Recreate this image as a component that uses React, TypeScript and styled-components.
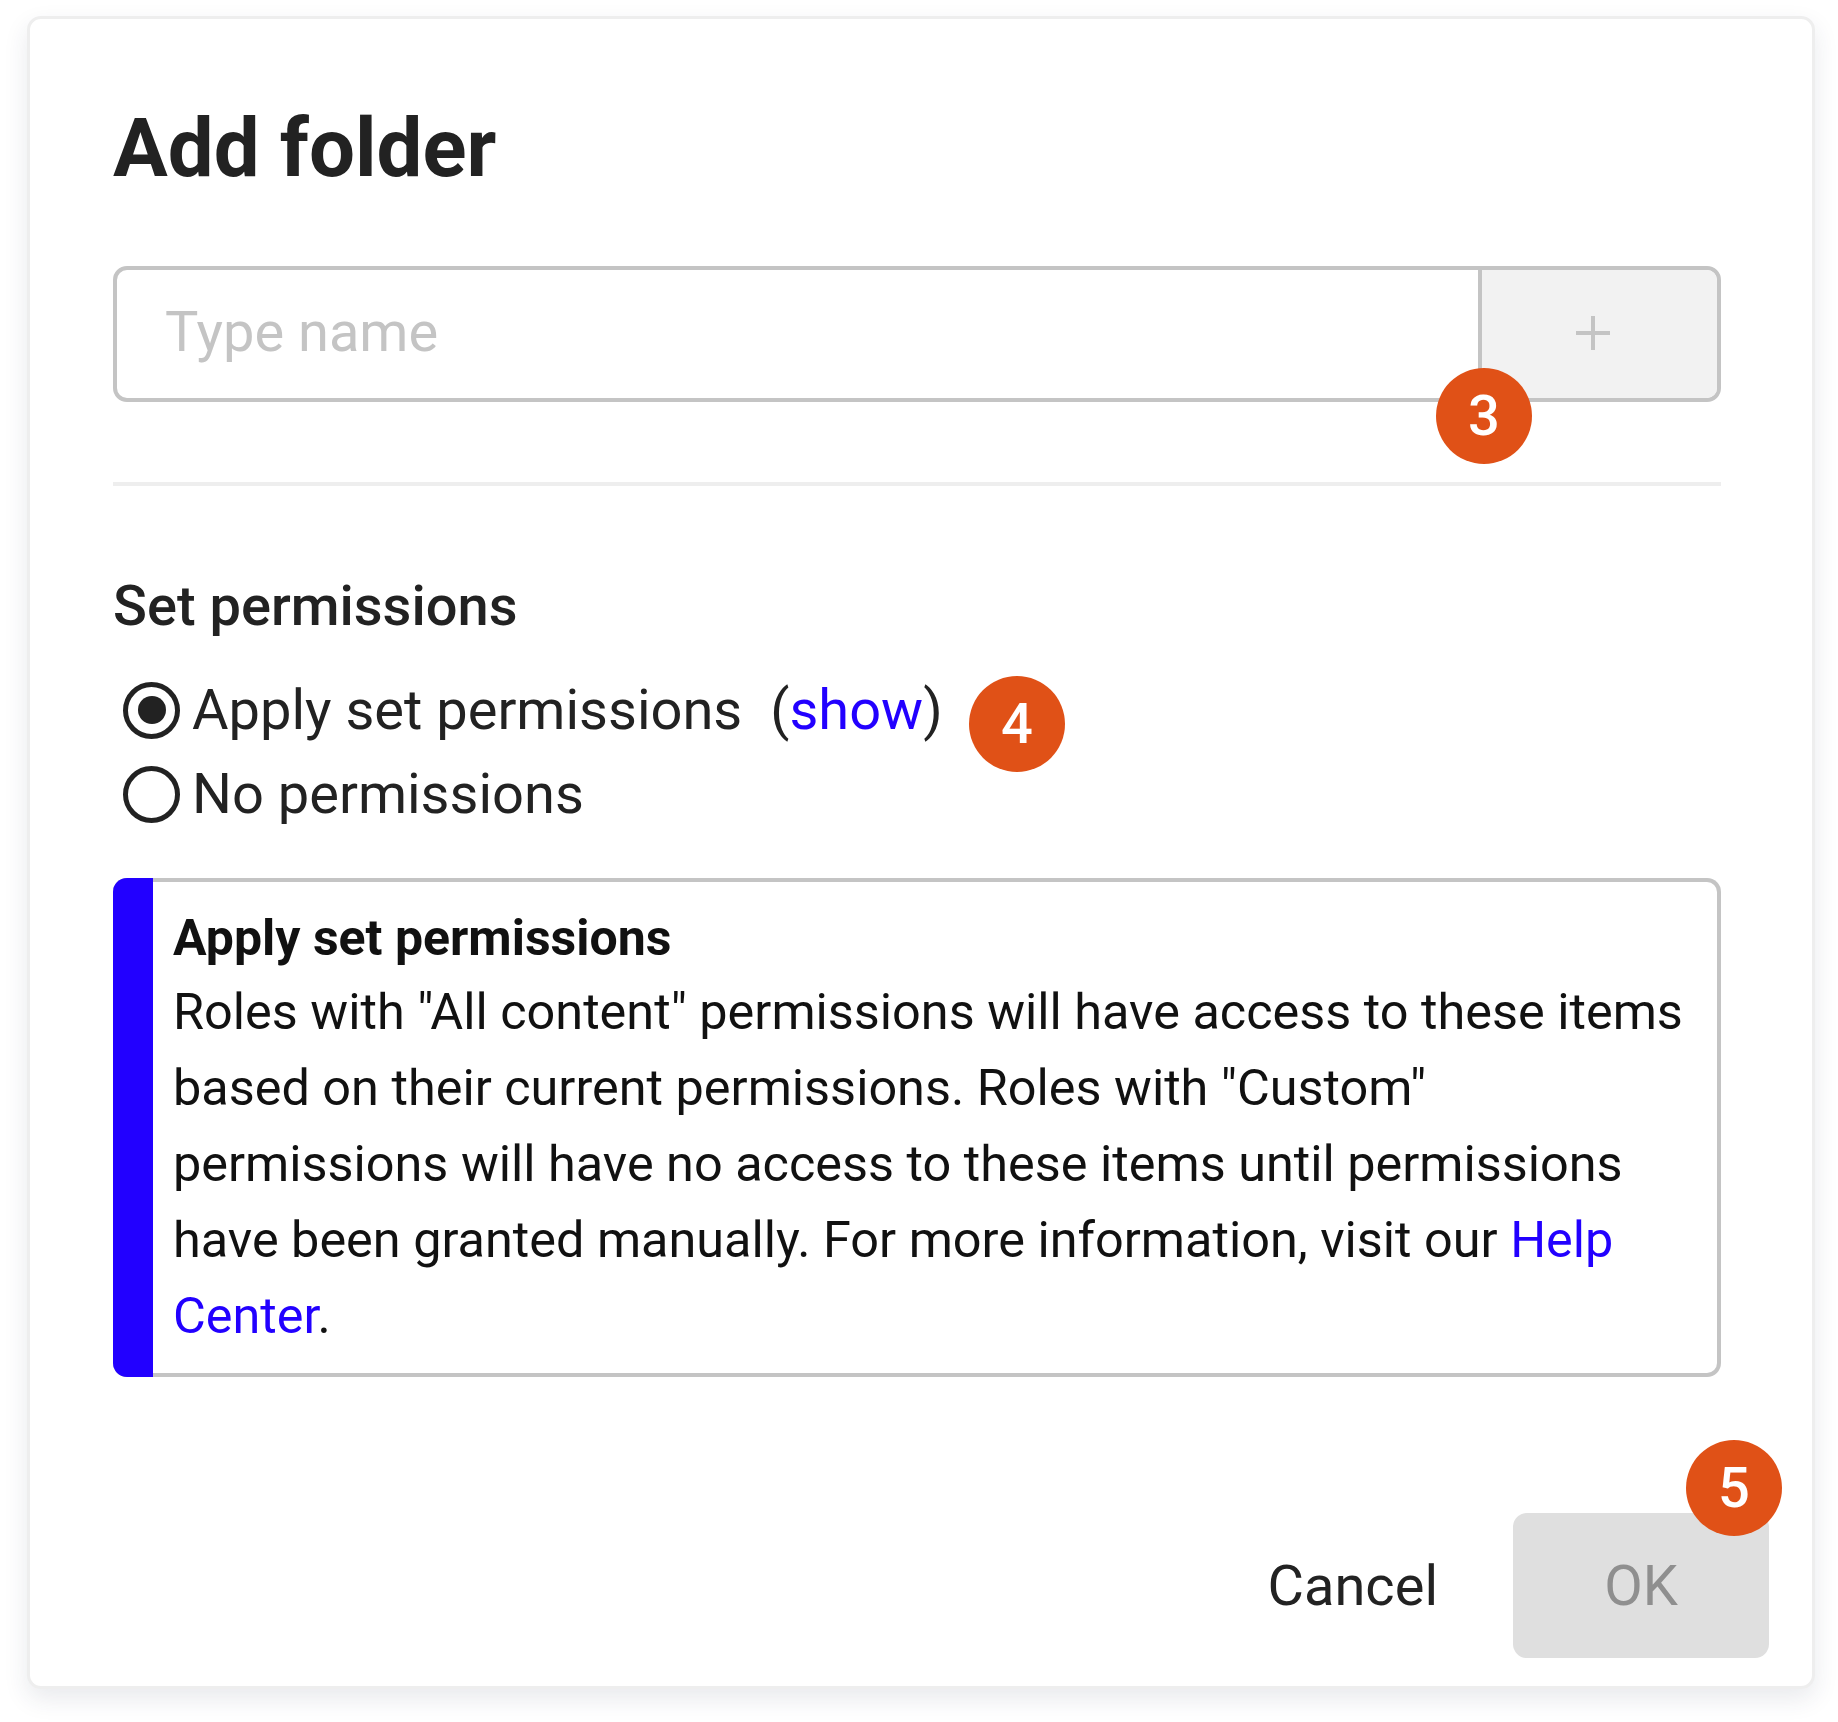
import React from "react";
import styled, { createGlobalStyle } from "styled-components";

const GlobalStyle = createGlobalStyle`
  html, body {
    margin: 0;
    padding: 0;
    background: #ffffff;
  }
  body {
    font-family: Roboto, "Liberation Sans", sans-serif;
    color: #222222;
  }
`;

const Page = styled.div`
  width: 1838px;
  height: 1722px;
  box-sizing: border-box;
  padding: 16px 23px 33px 27px;
`;

const Card = styled.div`
  box-sizing: border-box;
  height: 100%;
  display: flex;
  flex-direction: column;
  background: #ffffff;
  border: 3px solid #eeeeee;
  border-radius: 14px;
  box-shadow: 0 10px 24px rgba(40, 50, 80, 0.1);
`;

const Content = styled.div`
  flex: 1;
  display: flex;
  flex-direction: column;
  padding: 0 91px 0 83px;
`;

const Title = styled.h1`
  margin: 0;
  padding-top: 82px;
  font-size: 81.5px;
  line-height: 94px;
  font-weight: 700;
  color: #222222;
`;

const NameField = styled.div`
  position: relative;
  margin-top: 71px;
  height: 136px;
  box-sizing: border-box;
  display: flex;
  border: 4px solid #c4c4c4;
  border-radius: 14px;
`;

const NameInput = styled.input`
  flex: 1;
  min-width: 0;
  border: 0;
  outline: 0;
  background: transparent;
  padding: 0 0 4px 48px;
  font-family: inherit;
  font-size: 56px;
  color: #222222;

  &::placeholder {
    color: #c4c4c4;
    opacity: 1;
  }
`;

const AddButton = styled.div`
  width: 239px;
  padding: 0 14px 2px 0;
  box-sizing: border-box;
  display: flex;
  align-items: center;
  justify-content: center;
  background: #f2f2f2;
  border-left: 4px solid #c4c4c4;
  border-radius: 0 10px 10px 0;
  color: #c4c4c4;
`;

const Badge = styled.div<{ $left?: number; $right?: number; $top: number }>`
  position: absolute;
  left: ${(p) => (p.$left !== undefined ? `${p.$left}px` : "auto")};
  right: ${(p) => (p.$right !== undefined ? `${p.$right}px` : "auto")};
  top: ${(p) => p.$top}px;
  width: 96px;
  height: 96px;
  border-radius: 50%;
  display: flex;
  align-items: center;
  justify-content: center;
  background: #e05117;
  color: #ffffff;
  font-size: 56px;
  font-weight: 500;
`;

const Divider = styled.div`
  margin-top: 80px;
  height: 4px;
  background: #eeeeee;
`;

const SectionLabel = styled.div`
  margin-top: 88px;
  font-size: 56px;
  line-height: 64px;
  font-weight: 500;
  color: #222222;
`;

const RadioGroup = styled.div`
  margin-top: 44px;
  display: flex;
  flex-direction: column;
  gap: 28px;
  padding-left: 10px;
`;

const RadioRow = styled.div`
  position: relative;
  display: flex;
  align-items: center;
  gap: 12px;
  height: 56px;
  font-size: 56px;
  color: #222222;
  white-space: nowrap;
`;

const RadioMark = styled.span<{ $checked?: boolean }>`
  flex: none;
  box-sizing: border-box;
  width: 57px;
  height: 57px;
  border: 5px solid #222222;
  border-radius: 50%;
  display: flex;
  align-items: center;
  justify-content: center;

  &::after {
    content: "";
    display: ${(p) => (p.$checked ? "block" : "none")};
    width: 28px;
    height: 28px;
    border-radius: 50%;
    background: #222222;
  }
`;

const ShowNote = styled.span`
  margin-left: 16px;
`;

const Link = styled.a`
  color: #2200ff;
  text-decoration: none;
`;

const InfoBox = styled.div`
  margin-top: 56px;
  height: 499px;
  box-sizing: border-box;
  display: flex;
  border: 4px solid #c4c4c4;
  border-left: 0;
  border-radius: 14px;
`;

const InfoStripe = styled.div`
  flex: none;
  width: 40px;
  margin: -4px 0;
  background: #2200ff;
  border-radius: 14px 0 0 14px;
`;

const InfoBody = styled.div`
  padding: 21px 20px 0 20px;
  font-size: 50.4px;
  line-height: 76px;
  color: #111111;
`;

const InfoTitle = styled.div`
  font-size: 50px;
  font-weight: 700;
  line-height: 71px;
`;

const Footer = styled.div`
  position: relative;
  display: flex;
  justify-content: flex-end;
  align-items: center;
  gap: 75px;
  padding: 0 43px 28px 0;
`;

const CancelButton = styled.div`
  font-size: 56px;
  color: #222222;
`;

const OkButton = styled.div`
  width: 256px;
  height: 145px;
  display: flex;
  align-items: center;
  justify-content: center;
  background: #dfdfdf;
  border-radius: 14px;
  font-size: 56px;
  color: #8f8f8f;
`;

const PlusIcon = () => (
  <svg width="34" height="34" viewBox="0 0 34 34" aria-hidden="true">
    <path d="M17 0v34M0 17h34" stroke="currentColor" strokeWidth="4" fill="none" />
  </svg>
);

const App = () => {
  return (
    <Page>
      <GlobalStyle />
      <Card>
        <Content>
          <Title>Add folder</Title>
          <NameField>
            <NameInput placeholder="Type name" readOnly />
            <AddButton>
              <PlusIcon />
            </AddButton>
            <Badge $left={1319} $top={98}>
              3
            </Badge>
          </NameField>
          <Divider />
          <SectionLabel>Set permissions</SectionLabel>
          <RadioGroup>
            <RadioRow>
              <RadioMark $checked />
              Apply set permissions
              <ShowNote>
                (<Link>show</Link>)
              </ShowNote>
              <Badge $left={846} $top={-6}>
                4
              </Badge>
            </RadioRow>
            <RadioRow>
              <RadioMark />
              No permissions
            </RadioRow>
          </RadioGroup>
          <InfoBox>
            <InfoStripe />
            <InfoBody>
              <InfoTitle>Apply set permissions</InfoTitle>
              Roles with "All content" permissions will have access to these items based on
              their current permissions. Roles with "Custom" permissions will have no access
              to these items until permissions have been granted manually. For more
              information, visit our <Link>Help Center</Link>.
            </InfoBody>
          </InfoBox>
        </Content>
        <Footer>
          <CancelButton>Cancel</CancelButton>
          <OkButton>OK</OkButton>
          <Badge $right={30} $top={-73}>
            5
          </Badge>
        </Footer>
      </Card>
    </Page>
  );
};

export default App;
